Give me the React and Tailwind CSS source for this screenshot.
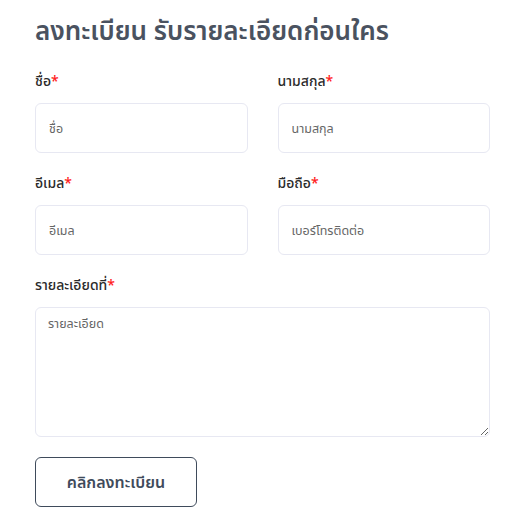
export default function App() {
  const font = { fontFamily: '"Noto Sans", "Noto Sans Thai", Tahoma, sans-serif' };
  const Label = ({ children }) => (
    <label className="block h-[20px] text-[14px] font-medium text-[#2b2b2b] leading-[20px] mb-[12px]">
      {children}
      <span className="text-[#ff2020]">*</span>
    </label>
  );
  const inputCls =
    "block w-full h-[50px] rounded-[6px] border border-[#e7e8f2] bg-white px-[13px] text-[12.5px] leading-[20px] text-[#555] placeholder:text-[#666] outline-none";
  return (
    <div className="w-[510px] h-[524px] bg-white pl-[35px] pr-[20px] pt-[13px]" style={font}>
      <h1 className="h-[34px] text-[26px] font-semibold text-[#4a5260] leading-[34px]">ลงทะเบียน รับรายละเอียดก่อนใคร</h1>
      <div className="mt-[24px] grid grid-cols-2 gap-x-[30px] gap-y-[20px]">
        <div>
          <Label>ชื่อ</Label>
          <input className={inputCls} placeholder="ชื่อ" />
        </div>
        <div>
          <Label>นามสกุล</Label>
          <input className={inputCls} placeholder="นามสกุล" />
        </div>
        <div>
          <Label>อีเมล</Label>
          <input className={inputCls} placeholder="อีเมล" />
        </div>
        <div>
          <Label>มือถือ</Label>
          <input className={inputCls} placeholder="เบอร์โทรติดต่อ" />
        </div>
        <div className="col-span-2">
          <Label>รายละเอียดที่</Label>
          <textarea
            className="block w-full h-[130px] rounded-[6px] border border-[#e7e8f2] bg-white px-[12px] py-[6px] text-[12.5px] leading-[20px] text-[#555] placeholder:text-[#666] outline-none"
            placeholder="รายละเอียด"
          />
        </div>
      </div>
      <button className="mt-[20px] w-[162px] h-[50px] rounded-[6px] border border-[#3f4b5b] bg-white text-[16px] leading-[20px] font-semibold text-[#3f4b5b]">
        คลิกลงทะเบียน
      </button>
    </div>
  );
}
